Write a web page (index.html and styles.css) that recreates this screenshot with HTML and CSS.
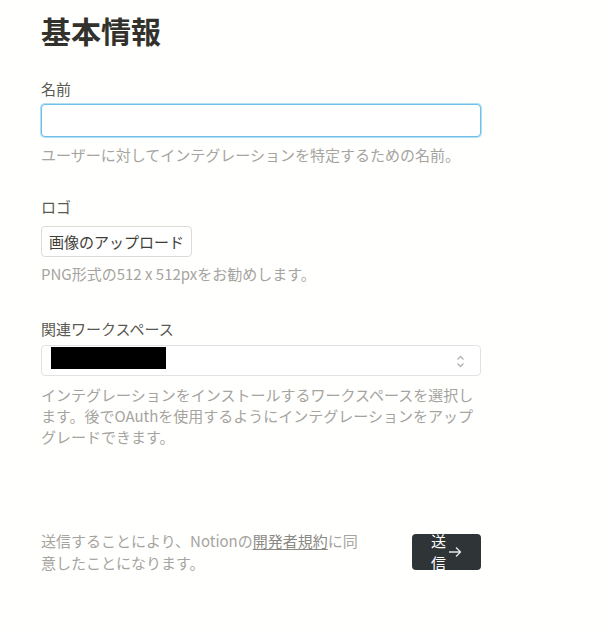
FILE: index.html
```html
<!DOCTYPE html>
<html lang="ja">
<head>
<meta charset="utf-8">
<title>基本情報</title>
<link rel="stylesheet" href="styles.css">
</head>
<body>
<main class="page">
  <h1 class="title">基本情報</h1>

  <section class="field field-name">
    <label class="label">名前</label>
    <div class="input"></div>
    <p class="help">ユーザーに対してインテグレーションを特定するための名前。</p>
  </section>

  <section class="field field-logo">
    <label class="label">ロゴ</label>
    <div class="upload-row"><button class="upload">画像のアップロード</button></div>
    <p class="help help-logo">PNG形式の512 x 512pxをお勧めします。</p>
  </section>

  <section class="field field-ws">
    <label class="label">関連ワークスペース</label>
    <div class="select">
      <span class="redacted"></span>
      <svg class="chev" width="9" height="13" viewBox="0 0 9 13"><path d="M1.5 4.5 L4.5 1.5 L7.5 4.5 M1.5 8.5 L4.5 11.5 L7.5 8.5" fill="none" stroke="#b4b2ad" stroke-width="1.3"/></svg>
    </div>
    <p class="help help-ws">インテグレーションをインストールするワークスペースを選択します。後でOAuthを使用するようにインテグレーションをアップグレードできます。</p>
  </section>

  <footer class="footer">
    <p class="terms">送信することにより、Notionの<span class="link">開発者規約</span>に同意したことになります。</p>
    <button class="submit"><span class="submit-text">送信</span><svg width="14" height="14" viewBox="0 0 14 14"><path d="M1 7 H12.5 M8 2.5 L12.5 7 L8 11.5" fill="none" stroke="#e8e8e8" stroke-width="1.3"/></svg></button>
  </footer>
</main>
</body>
</html>
```
FILE: styles.css
```css
html, body {
  margin: 0;
  padding: 0;
  background: #fffffe;
}
body {
  font-family: "Noto Sans CJK JP", "Noto Sans", sans-serif;
  font-size: 15px;
  line-height: 21px;
  color: #37352f;
}
.page {
  width: 440px;
  padding: 12px 0 0 41px;
}
.title {
  margin: 0;
  font-size: 30px;
  line-height: 36px;
  font-weight: 700;
  color: #33312c;
}
.field {
  display: flex;
  flex-direction: column;
}
.field-name { margin-top: 30px; }
.field-logo { margin-top: 31px; }
.field-ws { margin-top: 34px; }
.label {
  display: block;
  color: #5a5852;
}
.input {
  margin-top: 5px;
  box-sizing: border-box;
  height: 33px;
  border: 1px solid #6ec0ea;
  box-shadow: 0 0 0 1px #b3def3;
  border-radius: 4px;
  background: #fff;
}
.help {
  margin: 7px 0 0;
  color: #a6a49f;
}
.upload-row {
  margin-top: 9px;
  display: flex;
}
.upload {
  box-sizing: border-box;
  height: 31px;
  padding: 0 7px;
  font: inherit;
  color: #3f3d38;
  background: #fff;
  border: 1px solid #dcdbd8;
  border-radius: 4px;
}
.help-logo { margin-top: 6px; }
.select {
  margin-top: 6px;
  box-sizing: border-box;
  height: 31px;
  border: 1px solid #e3e2df;
  border-radius: 4px;
  background: #fff;
  display: flex;
  align-items: flex-start;
  justify-content: space-between;
  padding: 1px 15px 0 9px;
}
.redacted {
  width: 115px;
  height: 22px;
  background: #000;
}
.chev {
  align-self: center;
}
.help-ws { margin-top: 8px; }
.footer {
  margin-top: 83px;
  display: flex;
  align-items: center;
  justify-content: space-between;
}
.terms {
  margin: 0;
  width: 320px;
  line-height: 22px;
  color: #a6a49f;
}
.link {
  color: #8a8883;
  text-decoration: underline;
  text-underline-offset: 2px;
}
.submit {
  box-sizing: border-box;
  width: 69px;
  height: 36px;
  padding: 0;
  border: none;
  border-radius: 4px;
  background: #2f3437;
  color: #fff;
  font: inherit;
  line-height: 22px;
  display: flex;
  align-items: center;
  justify-content: center;
  gap: 2px;
}
.submit-text {
  width: 15px;
  word-break: break-all;
}
```
